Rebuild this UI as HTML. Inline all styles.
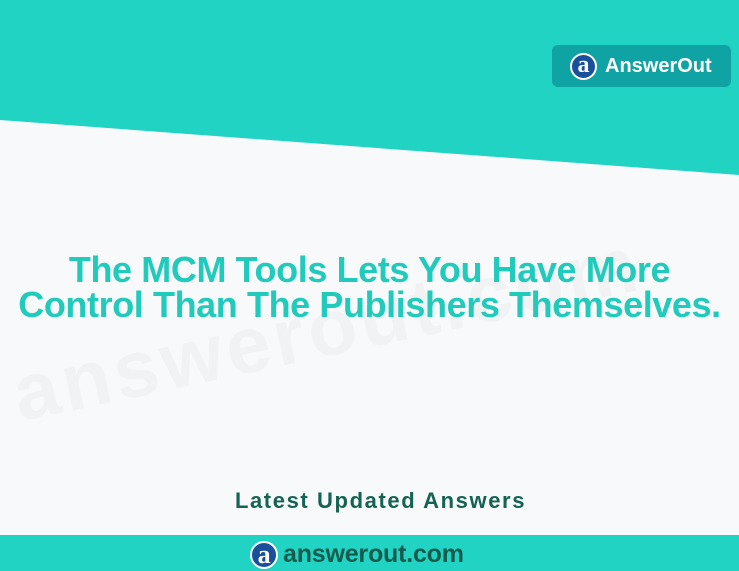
<!DOCTYPE html>
<html><head><style>
body{margin:0;width:739px;height:571px;overflow:hidden;background:#f8f9fa;position:relative;font-family:"Liberation Sans",sans-serif}
.top{position:absolute;left:0;top:0;width:739px;height:180px;background:#20d3c2;clip-path:polygon(0 0,739px 0,739px 175px,0 120px)}
.btn{position:absolute;left:552px;top:45px;width:179px;height:42px;background:#0fa3a3;border-radius:6px;color:#fff;font-weight:bold;font-size:20px;display:flex;align-items:center}
.logo{width:24px;height:24px;border-radius:50%;background:#1a4f9c;border:2px solid #fff;color:#fff;font-family:"Liberation Serif",serif;font-size:24px;line-height:20px;text-align:center;box-sizing:border-box}
h1{position:absolute;left:0;width:739px;top:252px;margin:0;text-align:center;color:#20cbbb;font-size:36px;line-height:35px;font-weight:bold;letter-spacing:-0.4px}
.wm{position:absolute;left:5px;top:350px;font-size:80px;font-weight:bold;color:#f1f2f4;transform:rotate(-12deg);transform-origin:left top;white-space:nowrap;letter-spacing:4px}
.lat{position:absolute;left:11px;width:739px;top:488px;text-align:center;color:#146353;font-weight:bold;font-size:22px;letter-spacing:1.6px}
.bot{position:absolute;left:0;top:535px;width:739px;height:36px;background:#20d3c2}
.bt{position:absolute;left:250px;top:540px;display:flex;align-items:center;color:#145a4d;font-weight:bold;font-size:25px;letter-spacing:-0.2px}
</style></head><body>
<div class="top"></div>
<div class="wm">answerout.com</div>
<div class="btn"><div class="logo" style="margin:0 8px 0 18px;width:27px;height:27px">a</div>AnswerOut</div>
<h1>The MCM Tools Lets You Have More<br>Control Than The Publishers Themselves.</h1>
<div class="lat">Latest Updated Answers</div>
<div class="bot"></div>
<div class="bt"><div class="logo" style="margin-right:5px;width:28px;height:28px;font-size:26px;line-height:23px">a</div>answerout.com</div>
</body></html>
